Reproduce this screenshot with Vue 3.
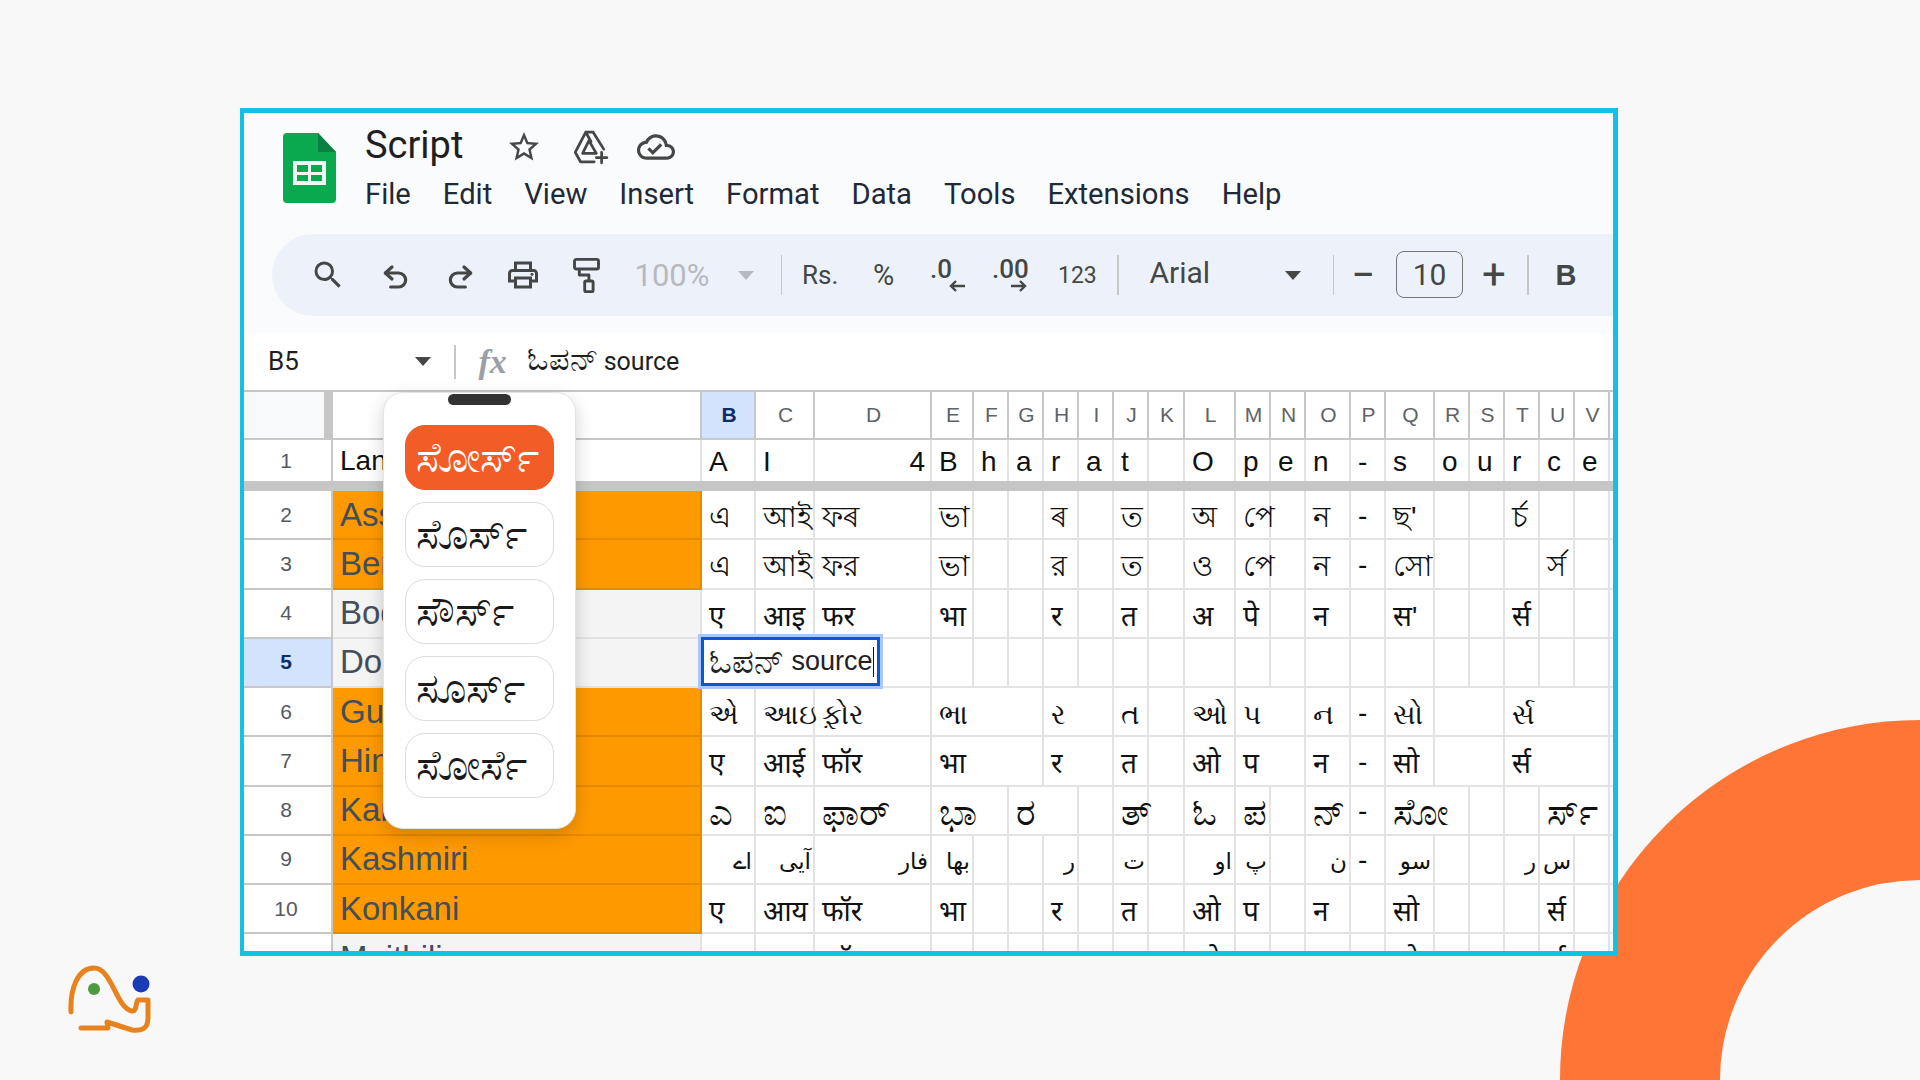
<script setup>
const menus = ['File', 'Edit', 'View', 'Insert', 'Format', 'Data', 'Tools', 'Extensions', 'Help']
const letters = 'BCDEFGHIJKLMNOPQRSTUV'.split('')

// one entry per sheet row; spans say how far overflowing text hides the grid lines
const rows = [
  { n: 2, lang: 'Assamese', fill: true, script: 'bn', cells: { B: 'এ', C: 'আই', D: 'ফৰ', E: 'ভা', H: 'ৰ', J: 'ত', L: 'অ', M: 'পে', O: 'ন', P: '-', Q: "ছ'", T: 'ৰ্চ' } },
  { n: 3, lang: 'Bengali', fill: true, script: 'bn', cells: { B: 'এ', C: 'আই', D: 'ফর', E: 'ভা', H: 'র', J: 'ত', L: 'ও', M: 'পে', O: 'ন', P: '-', Q: 'সো', U: 'র্স' } },
  { n: 4, lang: 'Bodo', script: 'de', cells: { B: 'ए', C: 'आइ', D: 'फर', E: 'भा', H: 'र', J: 'त', L: 'अ', M: 'पे', O: 'न', Q: "स'", T: 'र्स' } },
  { n: 5, lang: 'Dogri', active: true, cells: {} },
  { n: 6, lang: 'Gujarati', fill: true, script: 'gu', cells: { B: 'એ', C: 'આઇ', D: 'ફ઼ોર', E: 'ભા', H: 'ર', J: 'ત', L: 'ઓ', M: 'પ', O: 'ન', P: '-', Q: 'સો', T: 'ર્સ' }, spans: { E: 3, H: 2, M: 2, R: 2, T: 3 } },
  { n: 7, lang: 'Hindi', fill: true, script: 'de', cells: { B: 'ए', C: 'आई', D: 'फॉर', E: 'भा', H: 'र', J: 'त', L: 'ओ', M: 'प', O: 'न', P: '-', Q: 'सो', T: 'र्स' }, spans: { E: 3, H: 2, M: 2, R: 2, T: 3 } },
  { n: 8, lang: 'Kannada', fill: true, script: 'kn', cells: { B: 'ಎ', C: 'ಐ', D: 'ಫಾರ್', E: 'ಭಾ', G: 'ರ', J: 'ತ್', L: 'ಓ', M: 'ಪ', O: 'ನ್', P: '-', Q: 'ಸೋ', U: 'ರ್ಸ್' }, spans: { E: 2, G: 2, Q: 2, U: 2 } },
  { n: 9, lang: 'Kashmiri', fill: true, script: 'ks', cells: { B: 'اے', C: 'آیی', D: 'فار', E: 'بھا', H: 'ر', J: 'ت', L: 'او', M: 'پ', O: 'ن', P: '-', Q: 'سو', T: 'ر', U: 'س' } },
  { n: 10, lang: 'Konkani', fill: true, script: 'de', cells: { B: 'ए', C: 'आय', D: 'फॉर', E: 'भा', H: 'र', J: 'त', L: 'ओ', M: 'प', O: 'न', Q: 'सो', U: 'र्स' } },
  { n: 11, lang: 'Maithili', script: 'de', cells: { B: 'ए', C: 'आइ', D: 'फॉर', E: 'भा', H: 'र', J: 'त', L: 'ओ', M: 'प', O: 'न', Q: 'सो', U: 'र्स' } }
]

const firstRow = { B: 'A', C: 'I', D: '4', E: 'B', F: 'h', G: 'a', H: 'r', I: 'a', J: 't', L: 'O', M: 'p', N: 'e', O: 'n', P: '-', Q: 's', R: 'o', S: 'u', T: 'r', U: 'c', V: 'e' }

const cellsOf = (row) => {
  const out = []
  let i = 0
  while (i < letters.length) {
    const key = letters[i]
    const span = (row.spans && row.spans[key]) || 1
    out.push({ key, text: row.cells[key] || '', span })
    i += span
  }
  return out
}

const suggestions = ['ಸೋರ್ಸ್', 'ಸೊರ್ಸ್', 'ಸೌರ್ಸ್', 'ಸೂರ್ಸ್', 'ಸೋರ್ಸೆ']
</script>

<template>
  <div class="page">
    <div class="ring"></div>

    <svg class="brand" viewBox="0 0 140 110" width="140" height="110">
      <path d="M31 72 C30 48 38 28 54 28 C72 28 76 68 92 71 C97 72 96 60 98 60 L108 60 L108 78 C108 90 100 91 92 90 L67 82 L68 88 L41 88" fill="none" stroke="#e8821e" stroke-width="5" stroke-linecap="round" stroke-linejoin="round" />
      <circle cx="54" cy="49" r="6" fill="#4f9a3e" />
      <circle cx="101" cy="44" r="8.5" fill="#1a3bb5" />
    </svg>

    <div class="frame">
      <header class="head">
        <div class="title-block">
          <svg class="sheets-logo" viewBox="0 0 53 70" width="53" height="70">
            <path d="M4 0 H35 L53 19 V66 a4 4 0 0 1 -4 4 H4 a4 4 0 0 1 -4 -4 V4 a4 4 0 0 1 4 -4 z" fill="#0aa84f" />
            <path d="M35 0 L53 19 H35 z" fill="#0b8043" />
            <path d="M10 28 H43 V52 H10 z M14 32 V39 H25 V32 z M28 32 V39 H39 V32 z M14 42 V48 H25 V42 z M28 42 V48 H39 V42 z" fill="#f1f8f4" fill-rule="evenodd" />
          </svg>
          <div class="title-text">
            <div class="title-line">
              <span class="doc-name">Script</span>
              <svg class="star" viewBox="0 0 24 24" width="36" height="36"><path d="M22 9.24l-7.19-.62L12 2 9.19 8.63 2 9.24l5.46 4.73L5.82 21 12 17.27 18.18 21l-1.63-7.03L22 9.24zM12 15.4l-3.76 2.27 1-4.28-3.32-2.88 4.38-.38L12 6.1l1.71 4.04 4.38.38-3.32 2.88 1 4.28L12 15.4z" fill="#444746" /></svg>
              <svg class="drive" viewBox="0 0 36 36" width="38" height="38" fill="none" stroke="#444746" stroke-width="2.6" stroke-linejoin="round" stroke-linecap="round">
                <path d="M14 4 H21 L31 20 M14 4 L4 23 L9 32 H22 M14 4 L19 13" />
                <path d="M17 12 L24 24 H11 z" />
                <path d="M29 23 V33 M24 28 H34" />
              </svg>
              <svg class="cloud" viewBox="0 0 24 24" width="38" height="38"><path d="M19.35 10.04C18.67 6.59 15.64 4 12 4 9.11 4 6.6 5.64 5.35 8.04 2.34 8.36 0 10.91 0 14c0 3.31 2.69 6 6 6h13c2.76 0 5-2.24 5-5 0-2.64-2.05-4.78-4.65-4.96zM19 18H6c-2.21 0-4-1.79-4-4 0-2.05 1.53-3.76 3.56-3.97l1.07-.11.5-.95C8.08 7.14 9.94 6 12 6c2.62 0 4.88 1.86 5.39 4.43l.3 1.5 1.53.11c1.56.1 2.78 1.41 2.78 2.96 0 1.65-1.35 3-3 3zm-9-3.82l-2.09-2.09L6.5 13.5 10 17l6.01-6.01-1.41-1.41z" fill="#444746" /></svg>
            </div>
            <nav class="menu">
              <span v-for="m in menus" :key="m">{{ m }}</span>
            </nav>
          </div>
        </div>

        <div class="toolbar">
          <span class="tool first"><svg viewBox="0 0 24 24" width="36" height="36"><path d="M15.5 14h-.79l-.28-.27A6.471 6.471 0 0 0 16 9.5 6.5 6.5 0 1 0 9.5 16c1.61 0 3.09-.59 4.23-1.57l.27.28v.79l5 4.99L20.49 19l-4.99-5zm-6 0C7.01 14 5 11.99 5 9.5S7.01 5 9.5 5 14 7.01 14 9.5 11.99 14 9.5 14z" fill="#444746" /></svg></span>
          <span class="tool gap5"><svg viewBox="0 0 24 24" width="32" height="32" fill="none" stroke="#444746" stroke-width="2.4" stroke-linecap="round" stroke-linejoin="round"><path d="M9 15 L4 10.5 L9 6" /><path d="M4 10.5 H14 a5 5 0 0 1 0 10.5 H8" /></svg></span>
          <span class="tool"><svg viewBox="0 0 24 24" width="32" height="32" fill="none" stroke="#444746" stroke-width="2.4" stroke-linecap="round" stroke-linejoin="round"><path d="M15 15 L20 10.5 L15 6" /><path d="M20 10.5 H10 a5 5 0 0 0 0 10.5 H16" /></svg></span>
          <span class="tool"><svg viewBox="0 0 24 24" width="36" height="36"><path d="M19 8h-1V3H6v5H5c-1.66 0-3 1.34-3 3v6h4v4h12v-4h4v-6c0-1.66-1.34-3-3-3zM8 5h8v3H8V5zm8 12v2H8v-4h8v2zm2-2v-2H6v2H4v-4c0-.55.45-1 1-1h14c.55 0 1 .45 1 1v4h-2z" fill="#444746" /><circle cx="18" cy="11.5" r="1" fill="#444746" /></svg></span>
          <span class="tool"><svg viewBox="0 0 24 30" width="29" height="36" fill="none" stroke="#444746" stroke-width="2.4" stroke-linejoin="round"><rect x="2" y="2" width="20" height="8" rx="1.5" /><path d="M22 6 V5 M6 10 V15 H14 V20" /><rect x="10.5" y="20" width="7" height="9" rx="1.2" /></svg></span>
          <span class="zoom-box"><span class="zoom-val">100%</span><i class="caret light"></i></span>
          <i class="sep"></i>
          <span class="rs">Rs.</span>
          <span class="pct">%</span>
          <span class="dec"><b>.0</b><svg viewBox="0 0 18 12" width="18" height="12"><path d="M17 6 H3 M8 1 L3 6 L8 11" fill="none" stroke="#444746" stroke-width="2.4" /></svg></span>
          <span class="dec wide"><b>.00</b><svg viewBox="0 0 18 12" width="18" height="12"><path d="M1 6 H15 M10 1 L15 6 L10 11" fill="none" stroke="#444746" stroke-width="2.4" /></svg></span>
          <span class="num">123</span>
          <i class="sep"></i>
          <span class="font-box"><span>Arial</span><i class="caret"></i></span>
          <i class="sep after-font"></i>
          <span class="step minus">−</span>
          <span class="size">10</span>
          <span class="step plus">+</span>
          <i class="sep after-plus"></i>
          <span class="bold">B</span>
        </div>
      </header>

      <div class="formula">
        <span class="ref">B5</span>
        <i class="caret dark"></i>
        <i class="sep2"></i>
        <span class="fx">fx</span>
        <span class="ftext"><span class="kn-big">ಓಪನ್</span> source</span>
      </div>

      <div class="sheet">
        <div class="row col-head">
          <div class="corner"></div>
          <div class="ch a-col"></div>
          <div v-for="l in letters" :key="l" class="ch" :class="{ sel: l === 'B' }">{{ l }}</div>
        </div>

        <div class="row first-row">
          <div class="rh">1</div>
          <div class="cell a-col lang-one">Language</div>
          <div v-for="l in letters" :key="l" class="cell one" :class="{ right: l === 'D' }">{{ firstRow[l] }}</div>
        </div>
        <div class="freeze"></div>

        <div v-for="row in rows" :key="row.n" class="row">
          <div class="rh" :class="{ sel: row.active }">{{ row.n }}</div>
          <div class="cell a-col lang" :class="{ fill: row.fill }">{{ row.lang }}</div>
          <div
            v-for="c in cellsOf(row)"
            :key="c.key"
            class="cell"
            :class="[row.script, { plain: c.text === '-' }]"
            :style="{ gridColumn: 'span ' + c.span }"
          >{{ c.text }}</div>
        </div>

        <div class="edit"><span class="kn-edit">ಓಪನ್</span>&nbsp;source<i class="cursor"></i></div>

        <div class="popup">
          <div class="handle"></div>
          <div v-for="(s, i) in suggestions" :key="s" class="sug" :class="{ on: i === 0 }">{{ s }}</div>
        </div>
      </div>
    </div>
  </div>
</template>

<style scoped>
.page {
  position: relative;
  width: 1920px;
  height: 1080px;
  box-sizing: border-box;
  padding: 108px 0 0 240px;
  background: #f8f8f8;
  overflow: hidden;
  font-family: Roboto, "Liberation Sans", sans-serif;
}

.ring {
  position: absolute;
  left: 1560px;
  top: 720px;
  width: 720px;
  height: 720px;
  box-sizing: border-box;
  border: 160px solid #ff7535;
  border-radius: 50%;
}

.brand {
  position: absolute;
  left: 40px;
  top: 940px;
}

.frame {
  position: relative;
  width: 1378px;
  height: 848px;
  box-sizing: border-box;
  border: 5px solid #12c2e3;
  border-left-width: 4px;
  display: flex;
  flex-direction: column;
  background: #fff;
  overflow: hidden;
}

.head {
  height: 220px;
  flex: none;
  background: #f9fbfd;
}

.title-block {
  display: flex;
  height: 121px;
  padding-left: 39px;
  box-sizing: border-box;
}

.sheets-logo {
  margin-top: 20px;
  flex: none;
}

.title-text {
  margin-left: 29px;
}

.title-line {
  display: flex;
  align-items: center;
  height: 54px;
  margin-top: 7px;
}

.doc-name {
  font-size: 38px;
  color: #1f1f1f;
  width: 137px;
  margin-top: -4px;
}

.star {
  margin-right: 27px;
  margin-left: 4px;
}

.drive {
  margin-right: 28px;
  margin-left: 2px;
}

.menu {
  display: flex;
  gap: 32px;
  font-size: 29.2px;
  color: #1f2937;
  margin-top: 3px;
}

.toolbar {
  display: flex;
  align-items: center;
  height: 82px;
  margin-left: 28px;
  background: #edf2fa;
  border-radius: 41px 0 0 41px;
  color: #444746;
  font-size: 26px;
  white-space: nowrap;
}

.tool {
  width: 63.5px;
  display: flex;
  justify-content: center;
  flex: none;
}

.tool.first {
  margin-left: 24px;
}

.tool.gap5 {
  margin-left: 5px;
}

.zoom-box {
  display: flex;
  align-items: center;
  width: 146px;
  margin-left: 16px;
  flex: none;
}

.zoom-val {
  font-size: 31px;
  color: #b6b9bd;
  width: 103px;
}

.caret {
  display: block;
  width: 0;
  height: 0;
  border-left: 8px solid transparent;
  border-right: 8px solid transparent;
  border-top: 9px solid #444746;
}

.caret.light {
  border-top-color: #b6b9bd;
}

.sep {
  display: block;
  width: 1.5px;
  height: 40px;
  background: #c7c7c7;
  flex: none;
}

.sep.after-font {
  margin-left: 32px;
}

.sep.after-plus {
  margin-left: 17px;
}

.rs {
  margin-left: 20px;
  width: 71px;
  flex: none;
}

.pct {
  width: 57px;
  font-size: 29px;
  flex: none;
}

.dec {
  display: flex;
  flex-direction: column;
  align-items: flex-start;
  width: 62px;
  flex: none;
}

.dec b {
  font-weight: 500;
  font-size: 26px;
  line-height: 22px;
}

.dec svg {
  margin-left: 18px;
}

.dec.wide {
  width: 66px;
}

.num {
  font-size: 23px;
  width: 59px;
  flex: none;
}

.font-box {
  display: flex;
  align-items: center;
  justify-content: space-between;
  width: 151px;
  margin-left: 31px;
  font-size: 30px;
  flex: none;
}

.font-box span {
  margin-top: -5px;
}

.step {
  width: 32px;
  text-align: center;
  font-size: 42px;
  flex: none;
  line-height: 1;
}

.step.minus {
  margin-left: 13px;
}

.step.plus {
  margin-left: 15px;
}

.size {
  width: 67px;
  height: 47px;
  box-sizing: border-box;
  margin-left: 17px;
  margin-top: -2px;
  border: 1.5px solid #747775;
  border-radius: 8px;
  display: flex;
  align-items: center;
  justify-content: center;
  font-size: 30px;
  flex: none;
}

.bold {
  font-family: "Liberation Sans", sans-serif;
  font-weight: 700;
  font-size: 29px;
  margin-left: 27px;
}

.formula {
  height: 57px;
  flex: none;
  display: flex;
  align-items: center;
  background: #fff;
  box-sizing: border-box;
  padding-left: 24px;
  font-size: 25px;
  color: #1f1f1f;
}

.ref {
  width: 147px;
  font-size: 26px;
  margin-top: -2px;
}

.sep2 {
  display: block;
  width: 1.5px;
  height: 34px;
  background: #c7c7c7;
  margin-left: 23px;
}

.fx {
  font-family: "Liberation Serif", serif;
  font-style: italic;
  font-weight: 700;
  font-size: 34px;
  color: #9aa0a6;
  margin-left: 23px;
  width: 48px;
}

.ftext {
  margin-top: -5px;
}

.kn-big {
  font-size: 32px;
}

.sheet {
  position: relative;
  flex: none;
  border-top: 2px solid #c7c7c7;
  font-family: "Liberation Sans", "Noto Sans", "DejaVu Sans", sans-serif;
}

.row {
  display: grid;
  grid-template-columns: 89px 369px 54px 59px 117px 42px 35px 35px 35px 35px 35px 36px 51px 35px 35px 45px 35px 49px 35px 35px 35px 35px 35px 4px;
  grid-template-rows: minmax(0, 1fr);
  height: 49.25px;
  box-sizing: border-box;
  border-bottom: 2px solid #e3e3e3;
}

.col-head {
  height: 48px;
  border-bottom-color: #c7c7c7;
}

.first-row {
  height: 41px;
  border-bottom: 0;
}

.freeze {
  height: 10px;
  background: #c6c6c6;
}

.corner {
  background: #f8f9fa;
  border-right: 9px solid #c6c6c6;
}

.ch {
  display: flex;
  align-items: center;
  justify-content: center;
  padding-left: 2px;
  font-size: 21px;
  color: #5f6368;
  border-right: 2px solid #c7c7c7;
  box-sizing: border-box;
  background: #fff;
}

.ch.sel {
  background: #d3e3fd;
  color: #0b2d6b;
  font-weight: 700;
}

.rh {
  display: flex;
  align-items: center;
  justify-content: center;
  padding-right: 3px;
  font-size: 21px;
  color: #555a60;
  background: #fff;
  border-right: 2px solid #c7c7c7;
  box-shadow: 0 2px 0 #c7c7c7;
  box-sizing: border-box;
}

.rh.sel {
  background: #d3e3fd;
  color: #0b2d6b;
  font-weight: 700;
}

.cell {
  display: flex;
  align-items: center;
  padding-left: 7px;
  box-sizing: border-box;
  border-right: 2px solid #e3e3e3;
  font-size: 28px;
  color: #111;
  white-space: nowrap;
  min-width: 0;
  min-height: 0;
}

.cell.right {
  justify-content: flex-end;
  padding: 0 5px 0 0;
}

.cell.one {
  padding-top: 2px;
}

.cell.bn {
  font-size: 29px;
  padding-top: 7px;
}

.cell.de {
  padding-top: 3px;
}

.cell.gu {
  padding-top: 8px;
}

.cell.kn {
  font-size: 37px;
  padding-top: 5px;
}

.cell.ks {
  direction: rtl;
  padding: 4px 2px 0 0;
  font-size: 23px;
}

.cell.plain {
  direction: ltr;
  font-size: 28px;
  padding: 2px 0 0 7px;
}

.lang {
  font-size: 33px;
  color: #444f5c;
  background: #f4f4f4;
  padding-left: 7px;
}

.lang.fill {
  background: #ff9900;
  margin-bottom: -2px;
  border-bottom: 2px solid #e68a00;
  border-right-color: #e68a00;
}

.lang-one {
  padding-left: 7px;
}

.edit {
  position: absolute;
  left: 457px;
  top: 245px;
  width: 179px;
  height: 49px;
  box-sizing: border-box;
  display: flex;
  align-items: center;
  padding-left: 5px;
  background: #fff;
  border: 3.5px solid #0b57d0;
  box-shadow: 0 0 0 3px #a8c7fa;
  font-size: 27px;
  color: #222;
  white-space: nowrap;
}

.kn-edit {
  font-size: 34px;
}

.cursor {
  display: block;
  width: 1.5px;
  height: 30px;
  background: #111;
}

.popup {
  position: absolute;
  left: 139px;
  top: 0;
  width: 193px;
  height: 437px;
  box-sizing: border-box;
  padding: 32px 21px 0;
  background: #fff;
  border: 1px solid #e4e4e4;
  border-radius: 20px;
  box-shadow: 0 6px 18px rgba(0, 0, 0, 0.18);
  display: flex;
  flex-direction: column;
  gap: 12px;
}

.handle {
  position: absolute;
  left: 64px;
  top: 1px;
  width: 63px;
  height: 11px;
  border-radius: 6px;
  background: #333;
}

.sug {
  height: 65px;
  box-sizing: border-box;
  border: 1.5px solid #dcdcdc;
  border-radius: 20px;
  display: flex;
  align-items: center;
  padding-left: 10px;
  font-size: 43px;
  color: #1a1a1a;
  white-space: nowrap;
}

.sug.on {
  background: #f25c27;
  border-color: #f25c27;
  color: #fff;
}
</style>
